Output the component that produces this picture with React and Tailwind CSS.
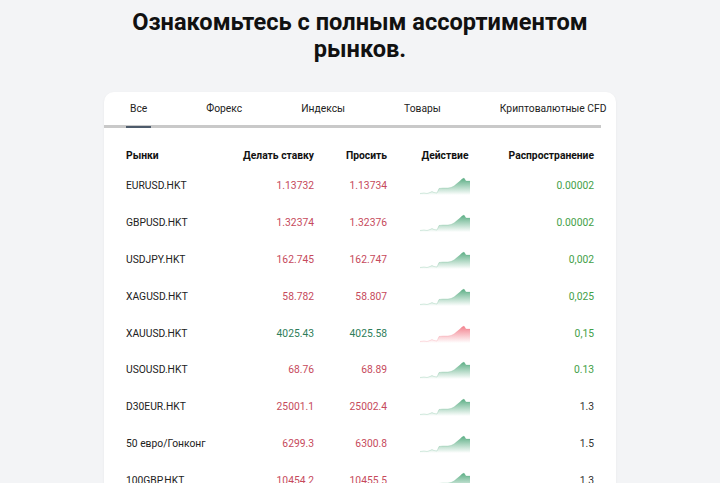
import React from 'react';

const TABS = ['Все', 'Форекс', 'Индексы', 'Товары', 'Криптовалютные CFD'];

const ROWS = [
  { name: 'EURUSD.HKT', bid: '1.13732', ask: '1.13734', up: true, spread: '0.00002', spreadTone: 'green' },
  { name: 'GBPUSD.HKT', bid: '1.32374', ask: '1.32376', up: true, spread: '0.00002', spreadTone: 'green' },
  { name: 'USDJPY.HKT', bid: '162.745', ask: '162.747', up: true, spread: '0,002', spreadTone: 'green' },
  { name: 'XAGUSD.HKT', bid: '58.782', ask: '58.807', up: true, spread: '0,025', spreadTone: 'green' },
  { name: 'XAUUSD.HKT', bid: '4025.43', ask: '4025.58', up: false, spread: '0,15', spreadTone: 'green' },
  { name: 'USOUSD.HKT', bid: '68.76', ask: '68.89', up: true, spread: '0.13', spreadTone: 'green' },
  { name: 'D30EUR.HKT', bid: '25001.1', ask: '25002.4', up: true, spread: '1.3', spreadTone: 'gray' },
  { name: '50 евро/Гонконг', bid: '6299.3', ask: '6300.8', up: true, spread: '1.5', spreadTone: 'gray' },
  { name: '100GBP.HKT', bid: '10454.2', ask: '10455.5', up: true, spread: '1.3', spreadTone: 'gray' },
];

// маленький график: зелёный для роста, красный для падения
const Spark = ({ up, id }) => {
  const color = up ? '#3e9f6e' : '#f06a78';
  const line = 'M0,18.5 L4,18 L7,18.5 L10,17.5 L12,16.5 L14,17.5 L17,18 L19,13.5 L23,13 L28,13 L31,12.5 L34,11 L37,8.5 L40,6 L42,4 L44,3 L46,6 L50,6';
  return (
    <svg width="50" height="20" viewBox="0 0 50 20">
      <defs>
        <linearGradient id={id} x1="0" y1="0" x2="0" y2="1">
          <stop offset="0%" stopColor={color} stopOpacity="0.85" />
          <stop offset="100%" stopColor={color} stopOpacity="0" />
        </linearGradient>
      </defs>
      <path d={`${line} L50,20 L0,20 Z`} fill={`url(#${id})`} />
      <path d={line} fill="none" stroke={color} strokeOpacity="0.25" strokeWidth="0.8" />
    </svg>
  );
};

const App = () => {
  return (
    <div className="min-h-screen bg-[#f3f4f6] font-['Roboto',sans-serif] pt-[9px]">
      <h1 className="text-center text-[23.6px] leading-[27px] font-bold text-[#111] mx-auto w-[480px]">
        Ознакомьтесь с полным ассортиментом рынков.
      </h1>

      <div className="mx-auto mt-[29px] w-[512px] bg-white rounded-[10px] shadow-[0_1px_3px_rgba(0,0,0,0.05)] overflow-hidden">
        {/* Вкладки */}
        <div className="relative pt-[10px]">
          <div className="flex gap-[51px] pl-[22px] whitespace-nowrap">
            {TABS.map((t, i) => (
              <div key={t} className="relative px-[4px] pb-[10px] text-[10.3px] leading-[13px] text-[#222]">
                {t}
                {i === 0 && <div className="absolute left-0 right-0 bottom-[-3px] h-[2px] bg-[#4d5b6b] z-10" />}
              </div>
            ))}
          </div>
          <div className="h-[3px] w-[497px] bg-[#c9c9c9]" />
        </div>

        {/* Таблица */}
        <div className="pl-[22px] pr-[22px] pt-[19px] text-[10.3px] leading-[14px] whitespace-nowrap">
          <div className="grid grid-cols-[114px_74px_73px_116px_91px] items-center h-[18px] font-bold text-[#111]">
            <div>Рынки</div>
            <div className="text-right">Делать ставку</div>
            <div className="text-right">Просить</div>
            <div className="text-center">Действие</div>
            <div className="text-right">Распространение</div>
          </div>
          <div className="pt-[3px]">
            {ROWS.map((r, i) => {
              const priceColor = r.up ? 'text-[#c64a5c]' : 'text-[#2e7d5a]';
              return (
                <div key={r.name} className="grid grid-cols-[114px_74px_73px_116px_91px] items-center h-[36.8px] text-[#222]">
                  <div>{r.name}</div>
                  <div className={`text-right ${priceColor}`}>{r.bid}</div>
                  <div className={`text-right ${priceColor}`}>{r.ask}</div>
                  <div className="flex justify-center -mt-[2px]">
                    <Spark up={r.up} id={`g${i}`} />
                  </div>
                  <div className={`text-right ${r.spreadTone === 'green' ? 'text-[#43a047]' : 'text-[#333]'}`}>{r.spread}</div>
                </div>
              );
            })}
          </div>
        </div>
      </div>
    </div>
  );
};

export default App;
